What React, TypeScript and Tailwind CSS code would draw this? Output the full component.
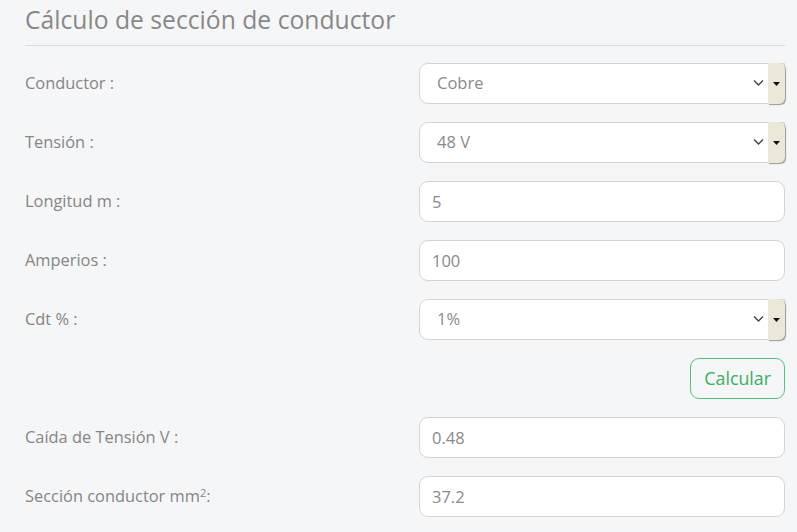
import { useState } from 'react';

const font = { fontFamily: '"Open Sans", "Noto Sans", sans-serif' };

const Label = ({ children }: { children: React.ReactNode }) => (
  <label className="w-[394px] shrink-0 text-[16.4px] text-[#858585]">{children}</label>
);

const SelectBox = ({ value, options }: { value: string; options: string[] }) => {
  const [v, setV] = useState(value);
  return (
    <div className="relative flex h-[41px] flex-1">
      <select
        value={v}
        onChange={(e) => setV(e.target.value)}
        className="h-full w-full appearance-none rounded-l-[9px] border border-[#d4d4d4] bg-white pl-[17px] text-[16.5px] text-[#8a8a8a] outline-none"
      >
        {options.map((o) => (
          <option key={o}>{o}</option>
        ))}
      </select>
      <svg
        className="pointer-events-none absolute right-[21px] top-[16px]"
        width="11"
        height="8"
        viewBox="0 0 11 8"
      >
        <path d="M1 1.5 L5.5 6 L10 1.5" fill="none" stroke="#444" strokeWidth="1.4" />
      </svg>
      <div className="pointer-events-none absolute right-0 top-0 flex h-full w-[17px] items-center justify-center rounded-r-[6px] bg-[#ebe8d9] shadow-[1px_1px_1px_#9a9a9a]">
        <svg width="7" height="4" viewBox="0 0 7 4">
          <path d="M0 0 L7 0 L3.5 4 Z" fill="#111" />
        </svg>
      </div>
    </div>
  );
};

const InputBox = ({ value }: { value: string }) => (
  <input
    defaultValue={value}
    className="h-[41px] flex-1 rounded-[9px] border border-[#d4d4d4] bg-white px-[12px] text-[16.5px] text-[#8a8a8a] outline-none"
  />
);

export default function App() {
  return (
    <div className="min-h-[532px] bg-[#f5f6f8] pl-[25px] pr-[12px]" style={font}>
      <h2 className="border-b border-[#dcdcdc] pb-[7px] pt-[1px] text-[24.7px] leading-[37px] font-normal text-[#888]">
        Cálculo de sección de conductor
      </h2>
      <div className="flex flex-col gap-[18px] pt-[17px]">
        <div className="flex items-center">
          <Label>Conductor :</Label>
          <SelectBox value="Cobre" options={['Cobre', 'Aluminio']} />
        </div>
        <div className="flex items-center">
          <Label>Tensión :</Label>
          <SelectBox value="48 V" options={['12 V', '24 V', '48 V']} />
        </div>
        <div className="flex items-center">
          <Label>Longitud m :</Label>
          <InputBox value="5" />
        </div>
        <div className="flex items-center">
          <Label>Amperios :</Label>
          <InputBox value="100" />
        </div>
        <div className="flex items-center">
          <Label>Cdt % :</Label>
          <SelectBox value="1%" options={['1%', '2%', '3%']} />
        </div>
        <div className="flex justify-end">
          <button className="h-[41px] rounded-[9px] border border-[#5cbf7a] bg-transparent px-[13px] text-[17.8px] text-[#3cae5e]">
            Calcular
          </button>
        </div>
        <div className="flex items-center">
          <Label>Caída de Tensión V :</Label>
          <InputBox value="0.48" />
        </div>
        <div className="flex items-center">
          <Label>
            Sección conductor mm<sup className="text-[11px]">2</sup>:
          </Label>
          <InputBox value="37.2" />
        </div>
      </div>
    </div>
  );
}
